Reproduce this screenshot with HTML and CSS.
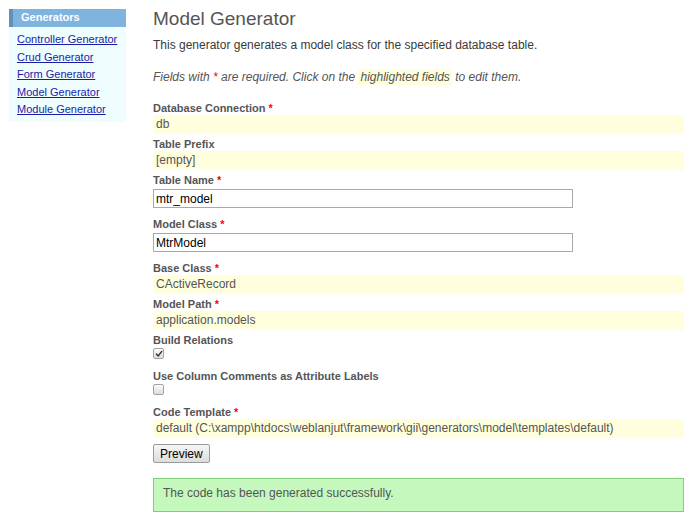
FILE: index.html
```html
<!DOCTYPE html>
<html lang="en">
<head>
<meta charset="utf-8">
<title>Gii - Model Generator</title>
<link rel="stylesheet" href="styles.css">
</head>
<body>
<div class="page">
  <aside class="sidebar">
    <div class="portlet-title">Generators</div>
    <ul class="portlet-links">
      <li><a href="#">Controller Generator</a></li>
      <li><a href="#">Crud Generator</a></li>
      <li><a href="#">Form Generator</a></li>
      <li><a href="#">Model Generator</a></li>
      <li><a href="#">Module Generator</a></li>
    </ul>
  </aside>
  <main class="content">
    <h1 class="title">Model Generator</h1>
    <p class="intro">This generator generates a model class for the specified database table.</p>
    <p class="note">Fields with <span class="required">*</span> are required. Click on the <span class="sticky">highlighted fields</span> to edit them.</p>
    <form class="form">
      <div class="row">
        <label class="label">Database Connection <span class="required">*</span></label>
        <div class="value">db</div>
      </div>
      <div class="row">
        <label class="label">Table Prefix</label>
        <div class="value">[empty]</div>
      </div>
      <div class="row row-input">
        <label class="label">Table Name <span class="required">*</span></label>
        <input class="text-input" type="text" value="mtr_model">
      </div>
      <div class="row row-input">
        <label class="label">Model Class <span class="required">*</span></label>
        <input class="text-input" type="text" value="MtrModel">
      </div>
      <div class="row">
        <label class="label">Base Class <span class="required">*</span></label>
        <div class="value">CActiveRecord</div>
      </div>
      <div class="row">
        <label class="label">Model Path <span class="required">*</span></label>
        <div class="value">application.models</div>
      </div>
      <div class="row row-check">
        <label class="label">Build Relations</label>
        <span class="checkbox">
          <svg class="check-mark" viewBox="0 0 9 9" width="9" height="9"><path d="M1.6 4.6 L3.6 6.8 L7.6 1.6" fill="none" stroke="#333" stroke-width="1.6" stroke-linecap="round" stroke-linejoin="round"/></svg>
        </span>
      </div>
      <div class="row row-check">
        <label class="label">Use Column Comments as Attribute Labels</label>
        <span class="checkbox"></span>
      </div>
      <div class="row">
        <label class="label">Code Template <span class="required">*</span></label>
        <div class="value">default (C:\xampp\htdocs\weblanjut\framework\gii\generators\model\templates\default)</div>
      </div>
      <div class="buttons">
        <button class="button" type="button">Preview</button>
      </div>
      <div class="success">The code has been generated successfully.</div>
    </form>
  </main>
</div>
</body>
</html>
```

FILE: styles.css
```css
html, body {
  margin: 0;
  padding: 0;
  background: #fff;
}

body {
  font-family: "Liberation Sans", Arial, sans-serif;
  font-size: 12px;
  color: #555;
}

.page {
  display: flex;
  gap: 27px;
  padding: 9px 3px 0 9px;
}

.sidebar {
  flex: none;
  width: 117px;
  align-self: flex-start;
  background: #effdff;
  padding-bottom: 3px;
}

.portlet-title {
  background: #7fb4df;
  border-left: 4px solid #5e91bd;
  color: #fff;
  font-weight: bold;
  font-size: 11px;
  line-height: 16px;
  padding: 0 0 2px 8px;
}

.portlet-links {
  list-style: none;
  margin: 0;
  padding: 4px 0 0 8px;
  font-size: 11px;
  line-height: 17.5px;
}

.portlet-links a {
  color: #1c1ca6;
  text-decoration: underline;
}

.content {
  flex: 1;
  min-width: 0;
}

.title {
  margin: 0;
  font-size: 19px;
  font-weight: normal;
  line-height: 20px;
  color: #555;
}

.intro {
  margin: 9px 0 0;
  line-height: 15px;
  color: #3a3a3a;
}

.note {
  margin: 17px 0 0;
  line-height: 15px;
  font-style: italic;
  color: #555;
}

.required {
  color: #f00;
}

.sticky {
  background: #ffffdd;
  padding: 1px 2px;
}

.form {
  margin-top: 17px;
}

.row {
  margin-bottom: 4px;
}

.label {
  display: block;
  font-weight: bold;
  font-size: 11px;
  line-height: 13px;
  color: #555;
}

.value {
  background: #ffffdd;
  line-height: 15px;
  padding: 2px 3px 2px;
  color: #555;
}

.row-input {
  margin-bottom: 10px;
}

.text-input {
  display: block;
  box-sizing: border-box;
  margin: 2px 0 0;
  width: 420px;
  height: 19px;
  border: 1px solid #a9a9a9;
  padding: 0 2px;
  font: 12px "Liberation Sans", Arial, sans-serif;
  color: #000;
  background: #fff;
  outline: none;
}

.row-check {
  margin-bottom: 11px;
}

.checkbox {
  display: flex;
  align-items: center;
  justify-content: center;
  box-sizing: border-box;
  margin-top: 1px;
  width: 11px;
  height: 11px;
  border: 1px solid #a3a3a3;
  border-radius: 2px;
  background: linear-gradient(#fcfcfc, #dcdcdc);
}

.check-mark {
  display: block;
  width: 8px;
  height: 8px;
}

.buttons {
  margin-top: 6px;
}

.button {
  box-sizing: border-box;
  height: 19px;
  padding: 0 6px;
  border: 1px solid #9a9a9a;
  border-radius: 2px;
  background: linear-gradient(#f6f6f6, #dddddd);
  font: 12px "Liberation Sans", Arial, sans-serif;
  color: #000;
}

.success {
  margin-top: 15px;
  border: 1px solid #7fd07c;
  background: #c4f8bd;
  padding: 7px 9px 11px;
  line-height: 14px;
  color: #555;
}
```
